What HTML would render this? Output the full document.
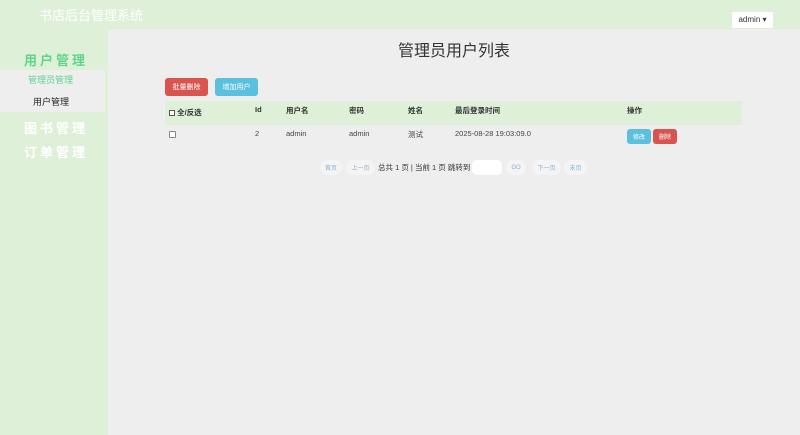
<!DOCTYPE html>
<html><head><meta charset="utf-8"><style>
*{margin:0;padding:0;box-sizing:border-box}
body{width:800px;height:435px;background:#dff0d8;font-family:"Liberation Sans","Noto Sans CJK SC",sans-serif;position:relative;overflow:hidden;color:#333}
.a{position:absolute;white-space:nowrap}
.main{position:absolute;left:108px;top:29px;width:692px;height:406px;background:#eee}
.btn{position:absolute;border-radius:3px;color:#fff;font-size:7px;text-align:center;display:flex;align-items:center;justify-content:center}
.pg{position:absolute;top:160px;height:15px;border-radius:8px;background:#f4f4f4;color:#8aaed0;font-size:6px;display:flex;align-items:center;justify-content:center}
.h{font-size:7.5px;font-weight:bold;top:105px}
.d{font-size:7.5px;color:#444;top:129px}
</style></head><body>
<div class="a" style="left:39px;top:5px;font-size:13px;color:#fff">书店后台管理系统</div>
<div class="a" style="left:732px;top:12px;width:41px;height:16px;background:#fff;font-size:8px;line-height:16px;text-align:center;color:#333">admin ▾</div>
<div class="a" style="left:24px;top:50px;font-size:13px;font-weight:bold;color:#5fd48a;letter-spacing:3px">用户管理</div>
<div class="a" style="left:0;top:70px;width:105px;height:42px;background:#eee"></div>
<div class="a" style="left:28px;top:73px;font-size:9px;color:#5fd48a">管理员管理</div>
<div class="a" style="left:33px;top:95px;font-size:9px;color:#222">用户管理</div>
<div class="a" style="left:24px;top:118px;font-size:13px;font-weight:bold;color:#fff;letter-spacing:3px">图书管理</div>
<div class="a" style="left:24px;top:142px;font-size:13px;font-weight:bold;color:#fff;letter-spacing:3px">订单管理</div>
<div class="main"></div>
<div class="a" style="left:398px;top:37px;font-size:16px;color:#333">管理员用户列表</div>
<div class="btn" style="left:165px;top:78px;width:43px;height:18px;background:#d9534f">批量删除</div>
<div class="btn" style="left:215px;top:78px;width:43px;height:18px;background:#5bc0de">增加用户</div>
<div class="a" style="left:165px;top:101px;width:577px;height:24px;background:#dff0d8"></div>
<div class="a h" style="left:169px;top:107px"><span style="display:inline-block;width:6px;height:6px;border:1px solid #555;vertical-align:-1px;background:#fff"></span> 全/反选</div>
<div class="a h" style="left:255px">Id</div>
<div class="a h" style="left:286px">用户名</div>
<div class="a h" style="left:349px">密码</div>
<div class="a h" style="left:408px">姓名</div>
<div class="a h" style="left:455px">最后登录时间</div>
<div class="a h" style="left:627px">操作</div>
<div class="a" style="left:169px;top:131px;width:7px;height:7px;border:1px solid #888;border-radius:1px;background:#fff"></div>
<div class="a d" style="left:255px">2</div>
<div class="a d" style="left:286px">admin</div>
<div class="a d" style="left:349px">admin</div>
<div class="a d" style="left:408px">测试</div>
<div class="a d" style="left:455px">2025-08-28 19:03:09.0</div>
<div class="btn" style="left:627px;top:129px;width:24px;height:15px;background:#5bc0de;font-size:6px">修改</div>
<div class="btn" style="left:653px;top:129px;width:24px;height:15px;background:#d9534f;font-size:6px">删除</div>
<div class="pg" style="left:320px;width:22px">首页</div>
<div class="pg" style="left:346px;width:29px">上一页</div>
<div class="a" style="left:378px;top:162px;font-size:7.5px;color:#333">总共 1 页 | 当前 1 页 跳转到</div>
<div class="a" style="left:472px;top:160px;width:30px;height:15px;background:#fff;border-radius:5px"></div>
<div class="pg" style="left:506px;width:20px">GO</div>
<div class="pg" style="left:532px;width:29px">下一页</div>
<div class="pg" style="left:564px;width:23px">末页</div>
</body></html>
